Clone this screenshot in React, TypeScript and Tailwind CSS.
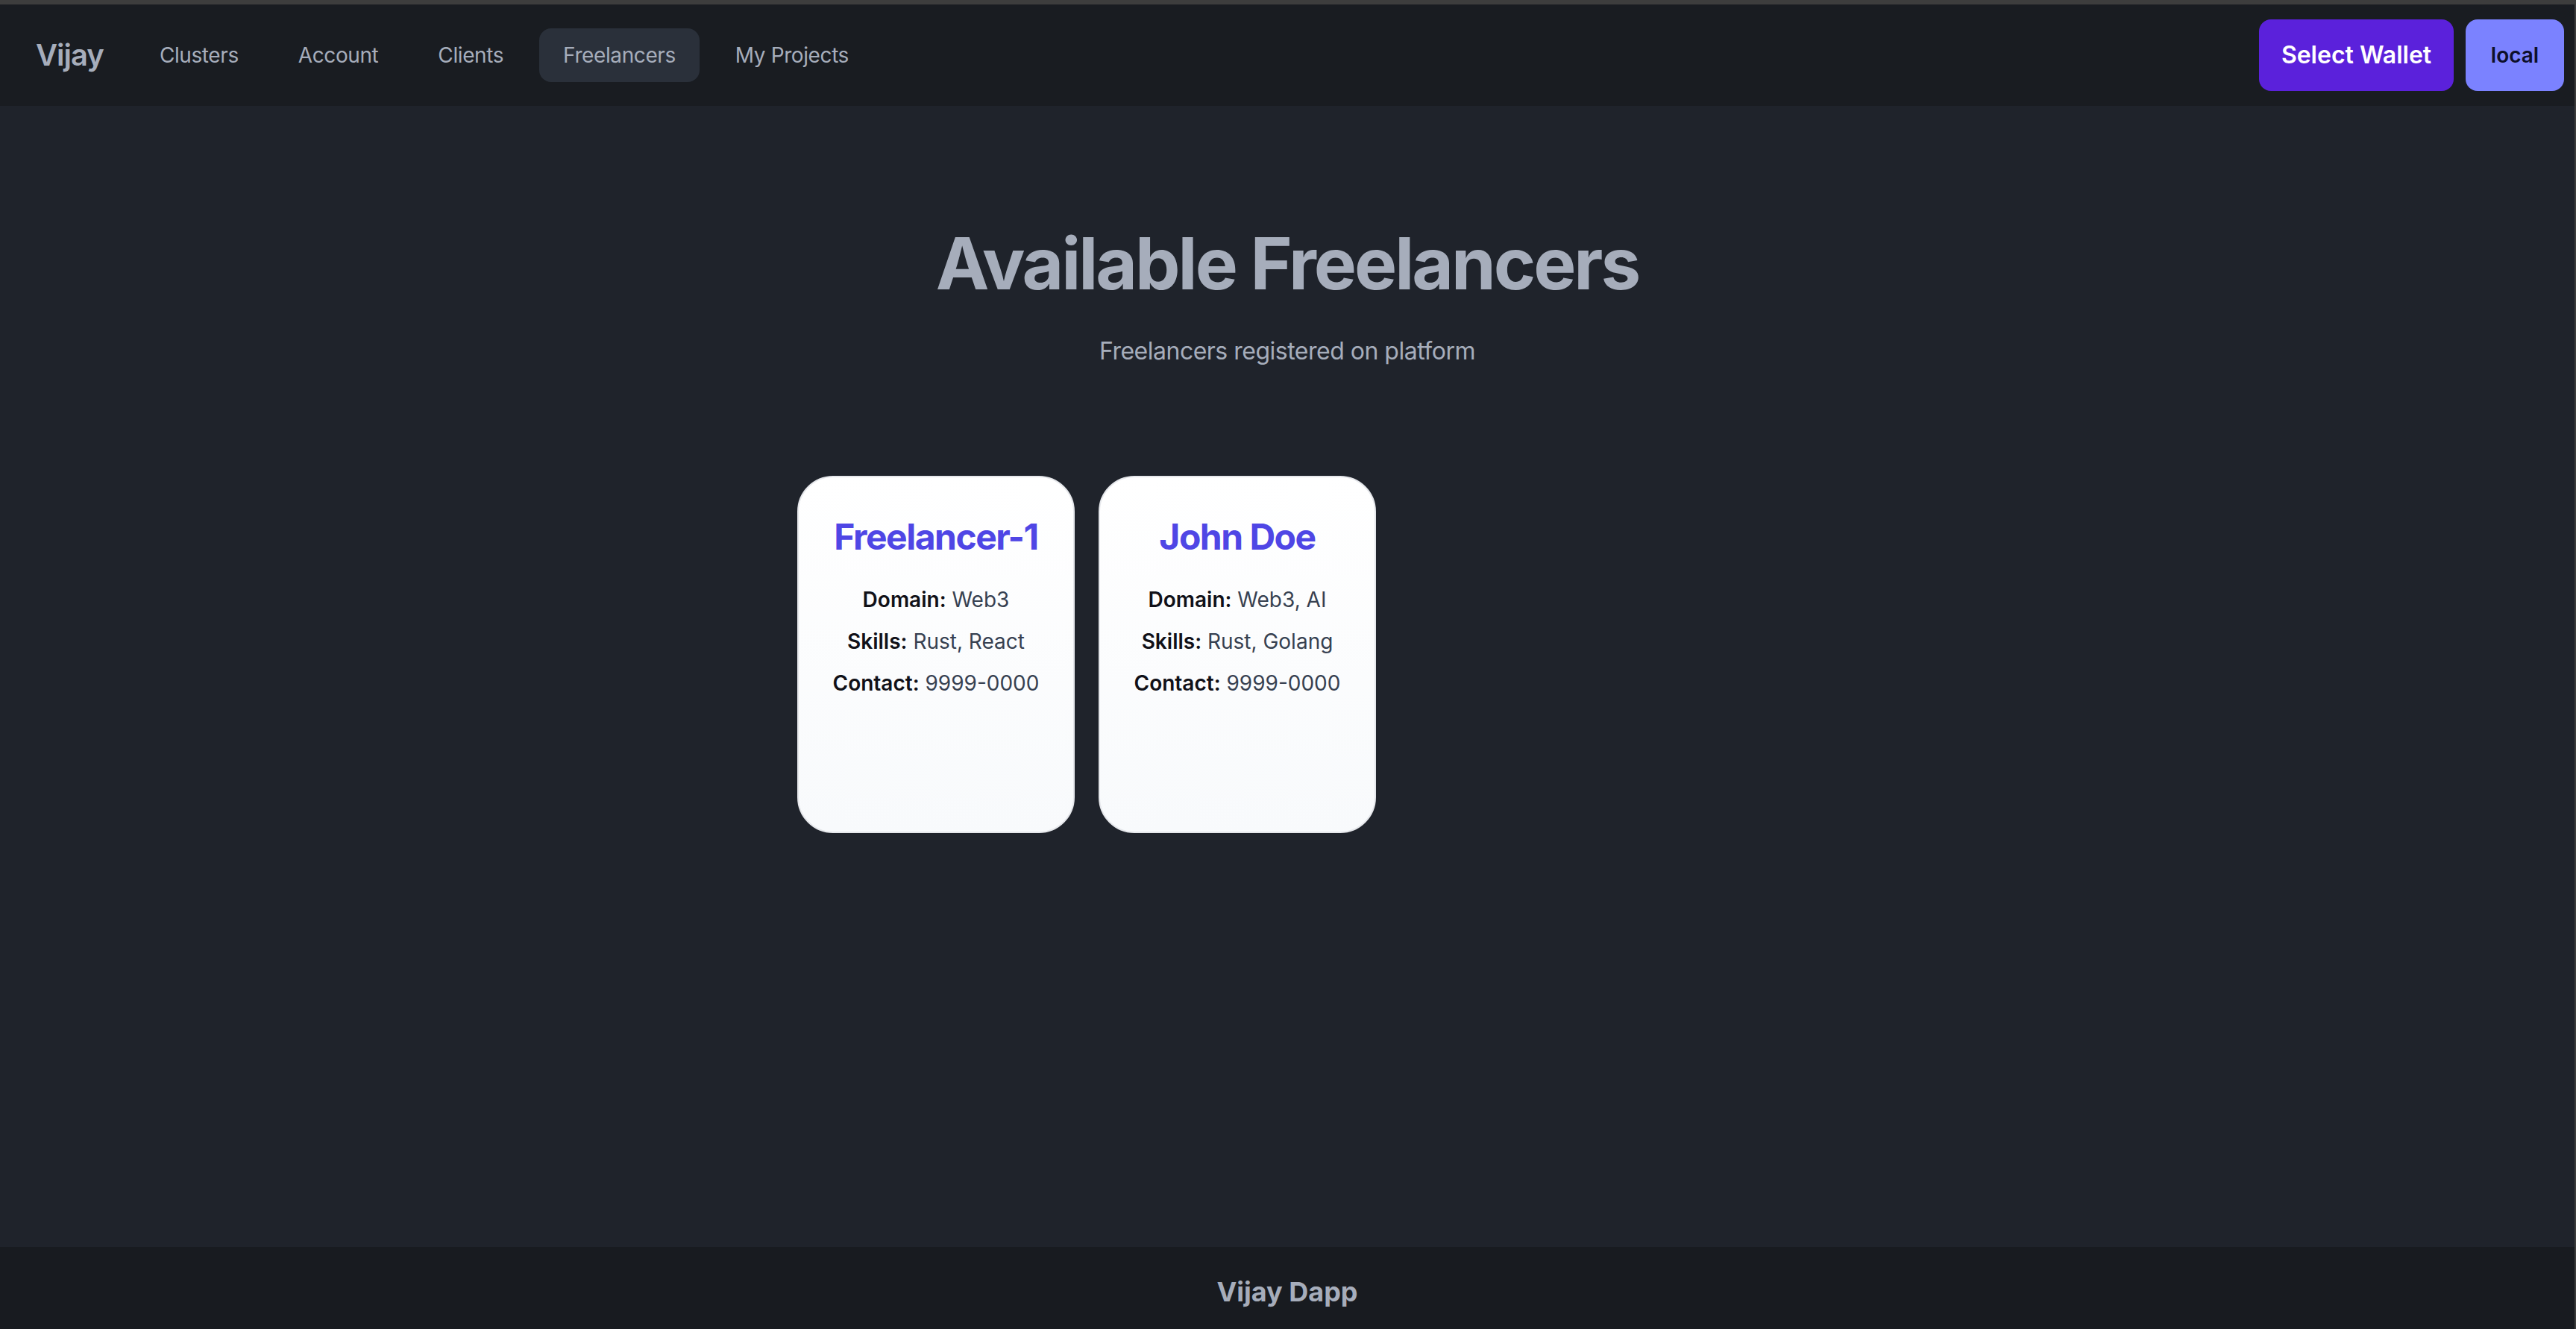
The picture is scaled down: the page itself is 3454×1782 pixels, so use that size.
const NAV_LINKS = ["Clusters", "Account", "Clients", "Freelancers", "My Projects"];

const FREELANCERS = [
  { name: "Freelancer-1", domain: "Web3", skills: "Rust, React", contact: "9999-0000" },
  { name: "John Doe", domain: "Web3, AI", skills: "Rust, Golang", contact: "9999-0000" },
];

export default function App() {
  return (
    <div className="min-h-screen flex flex-col bg-[#1f232b] border-t-[6px] border-r-[2px] border-[#3d3d3d] font-['Inter',sans-serif] text-[#a6adbb]">
      {/* Navbar */}
      <nav className="h-[136px] shrink-0 bg-[#191c21] flex items-center pl-[48px] pr-[14px]">
        <span className="text-[40px] leading-[48px] font-semibold tracking-[-1px] mr-[43px]">Vijay</span>
        <ul className="flex items-center gap-[16px]">
          {NAV_LINKS.map((link) => (
            <li
              key={link}
              className={`px-[32px] py-[16px] text-[28px] leading-[40px] tracking-[-0.4px] rounded-[16px] ${
                link === "Freelancers" ? "bg-[#2a303a]" : ""
              }`}
            >
              {link}
            </li>
          ))}
        </ul>
        <div className="ml-auto flex items-center gap-[16px]">
          <button className="w-[261px] h-[96px] rounded-[16px] bg-[#5b21db] text-white text-[32px] font-semibold">
            Select Wallet
          </button>
          <button className="w-[132px] h-[96px] rounded-[16px] bg-[#7b82ff] text-[#0d0f2b] text-[28px] font-semibold">
            local
          </button>
        </div>
      </nav>

      {/* Main */}
      <main className="flex-1 pt-[163px]">
        <div className="text-center">
          <h1 className="text-[96px] leading-none font-bold tracking-[-3px]">Available Freelancers</h1>
          <p className="mt-[46px] text-[32px] leading-[48px] tracking-[-0.5px]">Freelancers registered on platform</p>
        </div>

        <div className="mt-[143px] w-[1314px] mx-auto flex gap-[32px]">
          {FREELANCERS.map((f) => (
            <div
              key={f.name}
              className="w-[372px] h-[479px] rounded-[48px] border-2 border-[#e5e7eb] bg-gradient-to-b from-white to-[#f8fafc] px-[24px] pt-[48px] text-center"
            >
              <h2 className="text-[48px] leading-[64px] font-bold tracking-[-1.5px] text-[#4f46e5] mb-[32px]">{f.name}</h2>
              <div className="flex flex-col gap-[16px] text-[28px] leading-[40px] text-[#374151]">
                <p>
                  <span className="font-semibold text-[#111118]">Domain:</span> {f.domain}
                </p>
                <p>
                  <span className="font-semibold text-[#111118]">Skills:</span> {f.skills}
                </p>
                <p>
                  <span className="font-semibold text-[#111118]">Contact:</span> {f.contact}
                </p>
              </div>
            </div>
          ))}
        </div>
      </main>

      {/* Footer */}
      <footer className="h-[110px] shrink-0 bg-[#181b20] flex items-center justify-center pt-[10px]">
        <span className="text-[36px] leading-[54px] font-bold">Vijay Dapp</span>
      </footer>
    </div>
  );
}
